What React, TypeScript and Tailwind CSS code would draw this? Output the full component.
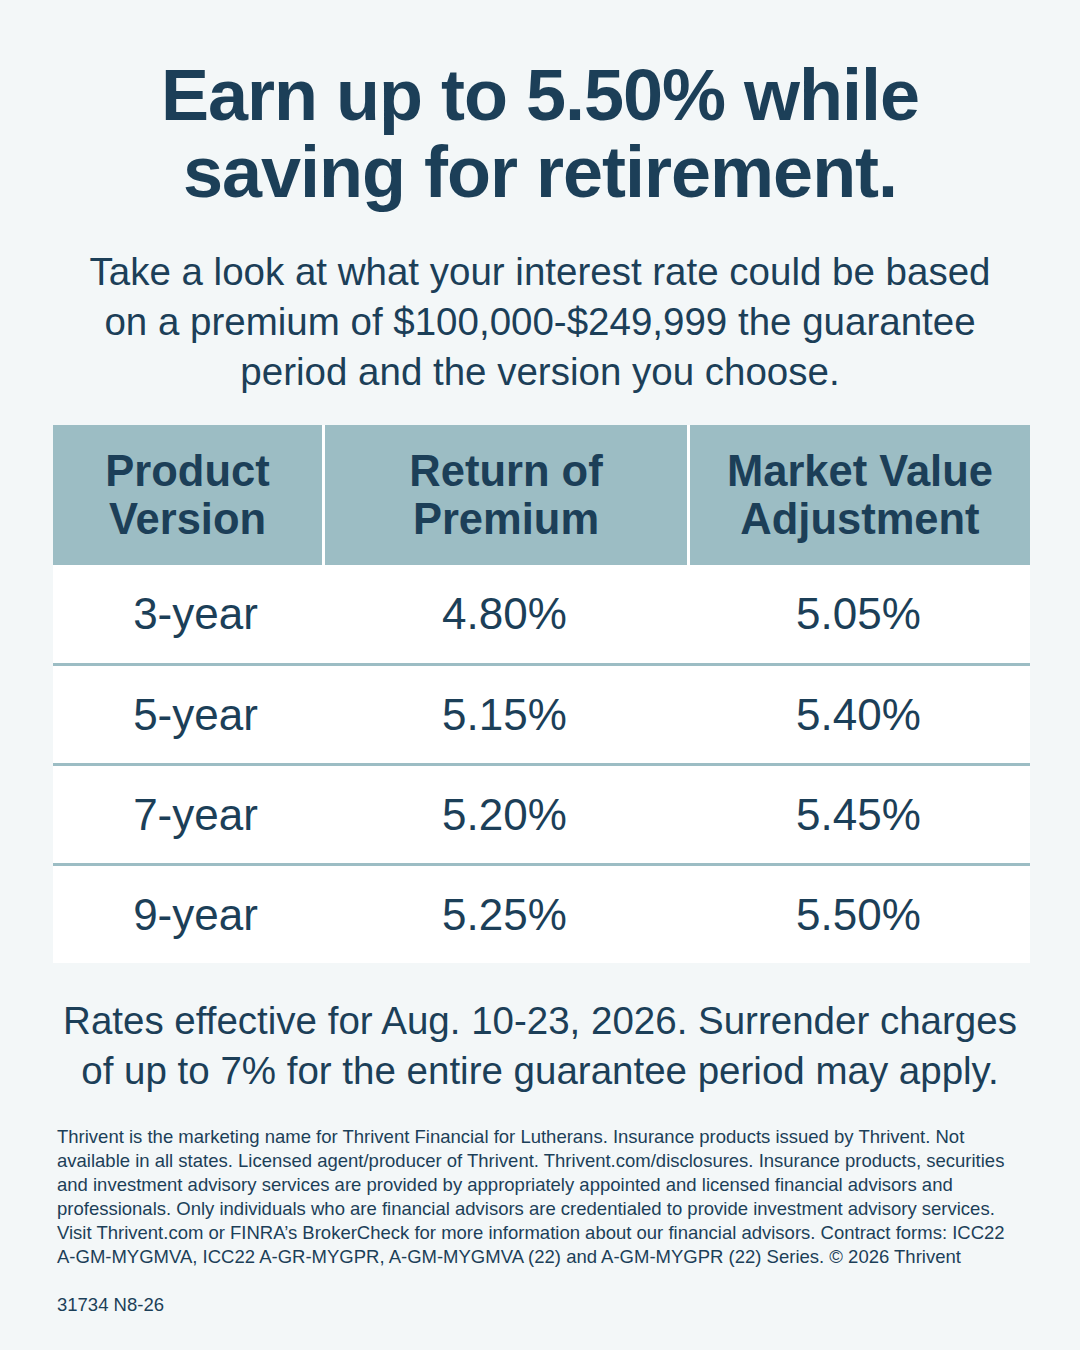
import React from "react";

const rows = [
  ["3-year", "4.80%", "5.05%"],
  ["5-year", "5.15%", "5.40%"],
  ["7-year", "5.20%", "5.45%"],
  ["9-year", "5.25%", "5.50%"],
];

export default function App() {
  return (
    <div
      className="w-[1080px] h-[1350px] bg-[#f3f7f8] text-[#1c3f58] overflow-hidden"
      style={{ fontFamily: '"Liberation Sans", Arial, sans-serif' }}
    >
      <h1 className="pt-[57px] text-center text-[72px] font-bold leading-[77px] tracking-[-1px]">
        Earn up to 5.50% while
        <br />
        saving for retirement.
      </h1>
      <p className="mt-[36px] text-center text-[38.5px] leading-[50px]">
        Take a look at what your interest rate could be based
        <br />
        on a premium of $100,000-$249,999 the guarantee
        <br />
        period and the version you choose.
      </p>

      <div className="ml-[53px] mt-[28px] w-[977px]">
        <div className="grid grid-cols-[269px_362px_340px] gap-x-[3px] bg-white">
          {["Product Version", "Return of Premium", "Market Value Adjustment"].map((h, i) => {
            const parts =
              i === 0
                ? ["Product", "Version"]
                : i === 1
                ? ["Return of", "Premium"]
                : ["Market Value", "Adjustment"];
            return (
              <div
                key={h}
                className="flex h-[140px] items-center justify-center bg-[#9cbdc4] text-center text-[43.5px] font-bold leading-[48px]"
              >
                <div>
                  {parts[0]}
                  <br />
                  {parts[1]}
                </div>
              </div>
            );
          })}
        </div>
        <div className="bg-white">
          {rows.map((r, idx) => (
            <div
              key={r[0]}
              className={
                idx === 0
                  ? "grid h-[98px] grid-cols-[269px_365px_343px] items-center text-[44px] leading-[48px]"
                  : "grid h-[100px] grid-cols-[269px_365px_343px] items-center border-t-[3px] border-[#9cbdc4] text-[44px] leading-[48px]"
              }
            >
              <div className="pl-[16px] text-center">{r[0]}</div>
              <div className="text-center">{r[1]}</div>
              <div className="text-center">{r[2]}</div>
            </div>
          ))}
        </div>
      </div>

      <p className="mt-[33px] text-center text-[38.5px] leading-[50px]">
        Rates effective for Aug. 10-23, 2026. Surrender charges
        <br />
        of up to 7% for the entire guarantee period may apply.
      </p>

      <div className="mt-[29px] px-[57px] text-[18.5px] leading-[24px] whitespace-nowrap">
        <p>
          Thrivent is the marketing name for Thrivent Financial for Lutherans. Insurance products issued by Thrivent. Not
          <br />
          available in all states. Licensed agent/producer of Thrivent. Thrivent.com/disclosures. Insurance products, securities
          <br />
          and investment advisory services are provided by appropriately appointed and licensed financial advisors and
          <br />
          professionals. Only individuals who are financial advisors are credentialed to provide investment advisory services.
          <br />
          Visit Thrivent.com or FINRA’s BrokerCheck for more information about our financial advisors. Contract forms: ICC22
          <br />
          A-GM-MYGMVA, ICC22 A-GR-MYGPR, A-GM-MYGMVA (22) and A-GM-MYGPR (22) Series. © 2026 Thrivent
        </p>
        <p className="mt-[24px]">31734 N8-26</p>
      </div>
    </div>
  );
}
